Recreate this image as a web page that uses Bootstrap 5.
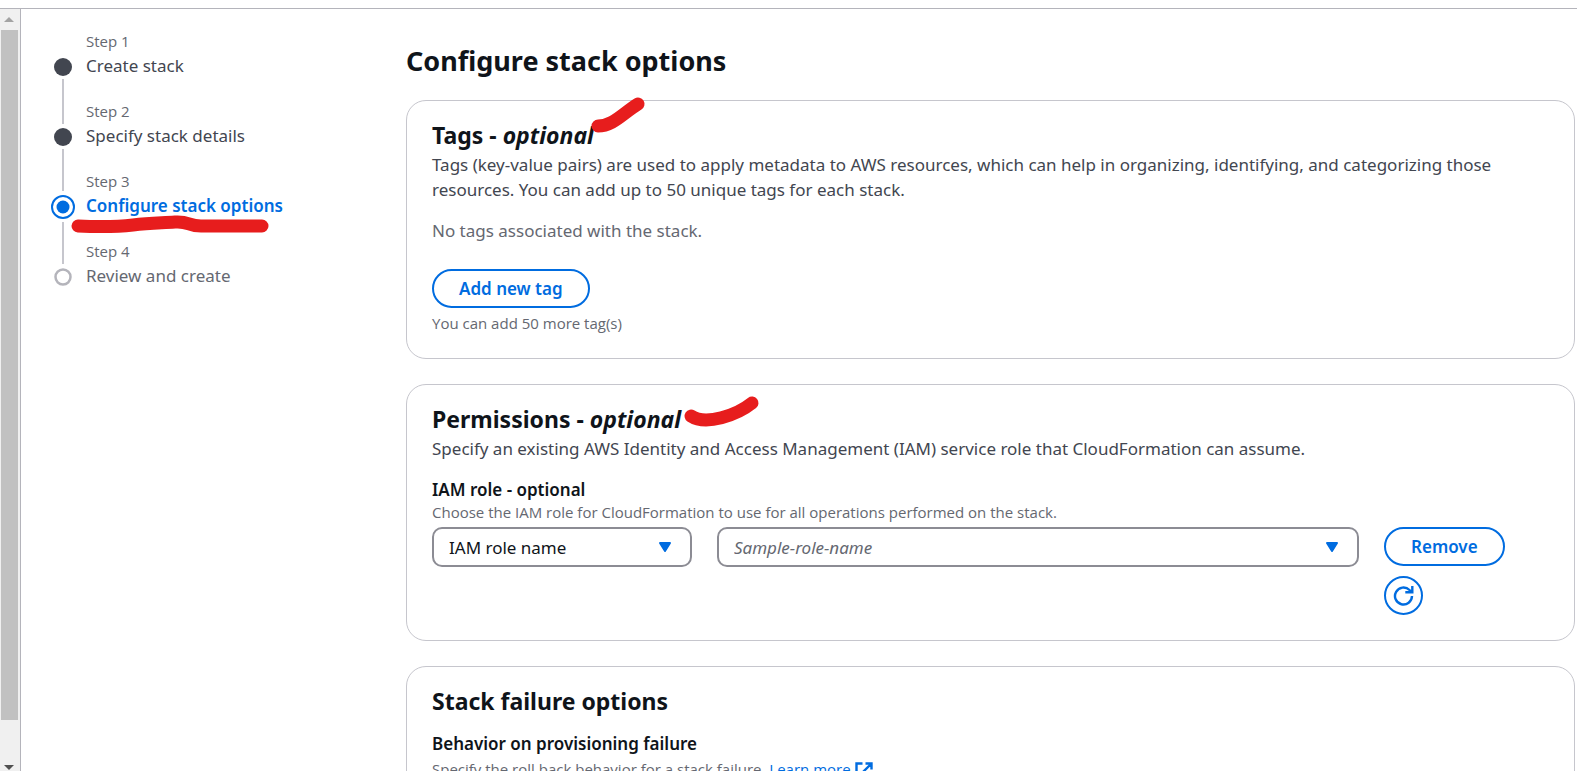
<!DOCTYPE html>
<html lang="en">
<head>
<meta charset="utf-8">
<meta name="viewport" content="width=device-width, initial-scale=1">
<title>Configure stack options</title>
<link rel="stylesheet" href="https://cdn.jsdelivr.net/npm/bootstrap@5.3.0/dist/css/bootstrap.min.css">
<style>
  :root { --accent: #006ce0; --ink: #0f141a; --muted: #656871; --copy: #424650; --edge: #c6c6cd; }
  body { font-family: "Noto Sans", "Open Sans", sans-serif; font-size: 17px; line-height: 25px; color: var(--ink); }
  .app-frame { border-top: 1px solid #b4b4bb; margin-top: 8px; height: calc(100vh - 8px); }
  .scroll-rail { width: 21px; background: #f0f0f0; border-right: 1px solid #b4b4bb; padding-right: 2px; }
  .rail-arrow { height: 21px; }
  .rail-thumb { background: #c1c1c1; margin: 0 0 0 1px; flex: 0 0 90.5%; }
  .steps-col { width: 385px; padding: 20px 0 0 30px; }
  .step-item { min-height: 70px; gap: 11px; }
  .step-mark { width: 24px; padding-top: 26px; }
  .step-mark svg { display: block; flex: none; }
  .step-line { width: 2px; background: var(--edge); position: absolute; left: 11px; top: 50px; bottom: -25px; }
  .step-item.to-current .step-line { bottom: -22px; }
  .step-item.current .step-line { top: 53px; }
  .step-name { font-family: "Open Sans", sans-serif; font-size: 15px; line-height: 24px; color: var(--muted); }
  .step-title { line-height: 23px; color: var(--copy); text-decoration: none; white-space: nowrap; }
  .current .step-title { color: var(--accent); font-weight: 600; }
  .future .step-title { color: var(--muted); }
  .page-title { font-size: 27px; line-height: 36px; font-weight: 700; padding-top: 34px; margin-bottom: 21px; }
  .panel { border: 1px solid var(--edge); border-radius: 20px; padding: 18px 25px 25px; margin-bottom: 25px; }
  .panel-title { font-size: 23px; line-height: 32px; font-weight: 700; margin: 0 0 1px; }
  .copy { color: var(--copy); margin: 0; }
  .empty-note { color: var(--muted); margin: 16px 0 26px; }
  .hint { font-family: "Open Sans", sans-serif; color: var(--muted); font-size: 15px; line-height: 20px; }
  .hint-below { margin-top: 5px; }
  .field-label { font-size: 17px; font-weight: 600; line-height: 25px; }
  .group-label { margin: 14px 0 3px; }
  .btn-pill { --bs-btn-color: var(--accent); --bs-btn-border-color: var(--accent); --bs-btn-hover-color: #fff; --bs-btn-hover-bg: var(--accent); --bs-btn-font-weight: 600; --bs-btn-font-size: 17px; --bs-btn-line-height: 25px; --bs-btn-padding-y: 5px; --bs-btn-padding-x: 25px; --bs-btn-border-width: 2px; --bs-btn-border-radius: 20px; }
  .btn-round { --bs-btn-padding-x: 7px; --bs-btn-padding-y: 7px; --bs-btn-line-height: 21px; margin-top: 10px; }
  .pick { height: 40px; border: 2px solid #8c8c94; border-radius: 10px; color: var(--ink); font-size: 17px; line-height: 25px; padding: 5px 40px 5px 15px; background-position: right 18px center; background-size: 14px 12px; background-image: url("data:image/svg+xml,%3Csvg xmlns='http://www.w3.org/2000/svg' viewBox='0 0 14 12'%3E%3Cpath d='M2 2h10L7 10z' fill='%23006ce0' stroke='%23006ce0' stroke-width='2' stroke-linejoin='round'/%3E%3C/svg%3E"); }
  .pick-empty { color: var(--muted); font-style: italic; }
  .role-grid { display: grid; grid-template-columns: 260px 1fr 165px; column-gap: 25px; padding-top: 5px; }
  .main-col { padding-right: 2px; }
  .ink { position: absolute; overflow: visible; pointer-events: none; fill: none; stroke: #e71d1d; stroke-width: 13px; stroke-linecap: round; stroke-linejoin: round; z-index: 2; }
  .more-link { color: var(--accent); text-decoration: none; }
</style>
</head>
<body class="overflow-hidden">
<div class="app-frame d-flex overflow-hidden">
  <div class="scroll-rail d-flex flex-column flex-shrink-0" aria-hidden="true">
    <div class="rail-arrow d-flex justify-content-center align-items-center flex-shrink-0"><svg width="10" height="5"><path d="M0 5h10L5 0z" fill="#a3a3a3"/></svg></div>
    <div class="rail-thumb"></div>
    <div class="mt-auto d-flex justify-content-center"><svg width="10" height="6"><path d="M0 0h10L5 5z" fill="#505050"/></svg></div>
  </div>

  <nav class="steps-col flex-shrink-0" aria-label="Steps">
    <ol class="list-unstyled m-0">
      <li class="step-item d-flex position-relative">
        <div class="step-mark"><svg width="24" height="24"><circle cx="12" cy="12" r="9" fill="#424650"/></svg><span class="step-line"></span></div>
        <div><div class="step-name">Step 1</div><a class="step-title" href="#">Create stack</a></div>
      </li>
      <li class="step-item to-current d-flex position-relative">
        <div class="step-mark"><svg width="24" height="24"><circle cx="12" cy="12" r="9" fill="#424650"/></svg><span class="step-line"></span></div>
        <div><div class="step-name">Step 2</div><a class="step-title" href="#">Specify stack details</a></div>
      </li>
      <li class="step-item current d-flex position-relative">
        <div class="step-mark"><svg width="24" height="24"><circle cx="12" cy="12" r="11" fill="none" stroke="#006ce0" stroke-width="2"/><circle cx="12" cy="12" r="6.5" fill="#006ce0"/></svg><span class="step-line"></span></div>
        <div><div class="step-name">Step 3</div><a class="step-title" href="#" aria-current="step">Configure stack options</a></div>
        <svg class="ink" style="left:20px;top:45px" width="210" height="20"><path d="M7 12C28 13 45 13 62 11S90 9 104 8S117 12 130 12H191"/></svg>
      </li>
      <li class="step-item future d-flex position-relative">
        <div class="step-mark"><svg width="24" height="24"><circle cx="12" cy="12" r="7.5" fill="none" stroke="#b4b4bb" stroke-width="2.5"/></svg></div>
        <div><div class="step-name">Step 4</div><a class="step-title" href="#">Review and create</a></div>
      </li>
    </ol>
  </nav>

  <main class="main-col flex-grow-1">
    <h1 class="page-title">Configure stack options</h1>

    <section class="panel position-relative">
      <h2 class="panel-title">Tags - <em>optional</em></h2>
      <svg class="ink" style="left:184px;top:-4px" width="56" height="40"><path d="M7 29C22 29 31 17 47 7"/></svg>
      <p class="copy">Tags (key-value pairs) are used to apply metadata to AWS resources, which can help in organizing, identifying, and categorizing those resources. You can add up to 50 unique tags for each stack.</p>
      <p class="empty-note">No tags associated with the stack.</p>
      <button type="button" class="btn btn-pill">Add new tag</button>
      <div class="hint hint-below">You can add 50 more tag(s)</div>
    </section>

    <section class="panel position-relative">
      <h2 class="panel-title">Permissions - <em>optional</em></h2>
      <svg class="ink" style="left:277px;top:10px" width="80" height="36"><path d="M7 21C22 31 53 20 68 8"/></svg>
      <p class="copy">Specify an existing AWS Identity and Access Management (IAM) service role that CloudFormation can assume.</p>
      <label class="field-label d-block pt-3" for="roleKind">IAM role - optional</label>
      <div class="hint">Choose the IAM role for CloudFormation to use for all operations performed on the stack.</div>
      <div class="role-grid">
        <select class="form-select pick" id="roleKind"><option>IAM role name</option></select>
        <select class="form-select pick pick-empty" aria-label="Role"><option>Sample-role-name</option></select>
        <div class="d-flex flex-column align-items-start">
          <button type="button" class="btn btn-pill">Remove</button>
          <button type="button" class="btn btn-pill btn-round" aria-label="Refresh"><svg class="d-block" width="21" height="21" fill="none" stroke="currentColor" stroke-width="2.4"><path d="M19 11a8.5 8.5 0 1 1-2.5-6l2 2M19.3 1v6.3h-7"/></svg></button>
        </div>
      </div>
    </section>

    <section class="panel">
      <h2 class="panel-title">Stack failure options</h2>
      <h3 class="field-label group-label">Behavior on provisioning failure</h3>
      <div class="hint">Specify the roll back behavior for a stack failure. <a class="more-link" href="#">Learn more <svg width="18" height="18" fill="none" stroke="currentColor" stroke-width="2.4"><path d="M7.500 1.500H1.500v15h15v-6M10.500 1.500h6v6M16 2L7.500 10.500"/></svg></a></div>
    </section>
  </main>
</div>
<script src="https://cdn.jsdelivr.net/npm/bootstrap@5.3.0/dist/js/bootstrap.bundle.min.js"></script>
</body>
</html>
